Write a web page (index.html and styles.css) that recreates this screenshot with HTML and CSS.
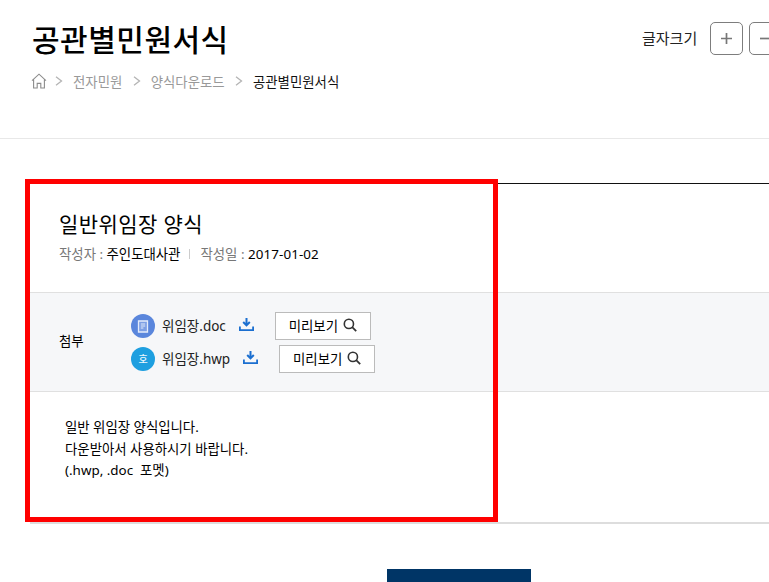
FILE: index.html
```html
<!DOCTYPE html>
<html lang="ko">
<head>
<meta charset="utf-8">
<title>공관별민원서식</title>
<link rel="stylesheet" href="styles.css">
</head>
<body>
<div class="page">
  <header class="head">
    <div class="head-main">
      <h1 class="title">공관별민원서식</h1>
      <nav class="crumbs">
        <svg class="home" width="16" height="16" viewBox="0 0 16 16"><path d="M1 7.6 8 1.2l7 6.4M2.6 6.4V15h3.6v-4.6h3.6V15h3.6V6.4" fill="none" stroke="#8c8c8c" stroke-width="1.1"/></svg>
        <svg class="sep" width="8" height="10" viewBox="0 0 8 10"><path d="M1 .8 6.5 5 1 9.2" fill="none" stroke="#b4b4b4" stroke-width="1.3"/></svg>
        <span class="crumb">전자민원</span>
        <svg class="sep" width="8" height="10" viewBox="0 0 8 10"><path d="M1 .8 6.5 5 1 9.2" fill="none" stroke="#b4b4b4" stroke-width="1.3"/></svg>
        <span class="crumb">양식다운로드</span>
        <svg class="sep" width="8" height="10" viewBox="0 0 8 10"><path d="M1 .8 6.5 5 1 9.2" fill="none" stroke="#b4b4b4" stroke-width="1.3"/></svg>
        <span class="crumb current">공관별민원서식</span>
      </nav>
    </div>
    <div class="font-size">
      <span class="font-label">글자크기</span>
      <button class="size-btn"><svg width="13" height="13" viewBox="0 0 13 13"><path d="M6.5 1v11M1 6.5h11" stroke="#777" stroke-width="1.7"/></svg></button>
      <button class="size-btn"><svg width="13" height="13" viewBox="0 0 13 13"><path d="M1 6.5h11" stroke="#777" stroke-width="1.7"/></svg></button>
    </div>
  </header>

  <main class="article">
    <div class="article-head">
      <h2 class="article-title">일반위임장 양식</h2>
      <p class="meta"><span class="key">작성자 : </span>주인도대사관<i class="bar"></i><span class="key">작성일 : </span><span class="date">2017-01-02</span></p>
    </div>
    <div class="attach">
      <span class="attach-label">첨부</span>
      <ul class="files">
        <li class="file">
          <span class="badge doc"><svg width="12" height="13" viewBox="0 0 12 13"><path d="M1.5 1h9v11h-9z" fill="#7d9fe4" stroke="#e3ebfa" stroke-width="1.3"/><path d="M3.8 4h4.4M3.8 6h4.4M3.8 8h2.6" stroke="#e3ebfa" stroke-width="1"/></svg></span>
          <span class="file-name">위임장.doc</span>
          <svg class="down" width="15" height="13" viewBox="0 0 15 13"><path d="M7.5 0v7M4.2 4 7.5 7.4 10.8 4" fill="none" stroke="#1b6fd0" stroke-width="2"/><path d="M.9 8.5v3.6h13.2V8.5" fill="none" stroke="#1b6fd0" stroke-width="1.8"/></svg>
          <button class="preview">미리보기<svg width="14" height="14" viewBox="0 0 14 14"><circle cx="5.9" cy="5.9" r="4.6" fill="none" stroke="#333" stroke-width="1.6"/><path d="m9.2 9.2 4 4" stroke="#333" stroke-width="1.8"/></svg></button>
        </li>
        <li class="file">
          <span class="badge hwp"><span class="hwp-mark">호</span></span>
          <span class="file-name">위임장.hwp</span>
          <svg class="down" width="15" height="13" viewBox="0 0 15 13"><path d="M7.5 0v7M4.2 4 7.5 7.4 10.8 4" fill="none" stroke="#1b6fd0" stroke-width="2"/><path d="M.9 8.5v3.6h13.2V8.5" fill="none" stroke="#1b6fd0" stroke-width="1.8"/></svg>
          <button class="preview">미리보기<svg width="14" height="14" viewBox="0 0 14 14"><circle cx="5.9" cy="5.9" r="4.6" fill="none" stroke="#333" stroke-width="1.6"/><path d="m9.2 9.2 4 4" stroke="#333" stroke-width="1.8"/></svg></button>
        </li>
      </ul>
    </div>
    <div class="body-text">
      <p>일반 위임장 양식입니다.</p>
      <p>다운받아서 사용하시기 바랍니다.</p>
      <p>(.hwp, .doc&nbsp; 포멧)</p>
    </div>
    <div class="highlight"></div>
  </main>
  <div class="actions"><a class="list-btn"></a></div>
</div>
</body>
</html>
```
FILE: styles.css
```css
* { box-sizing: border-box; }
html, body { margin: 0; padding: 0; height: 582px; overflow: hidden; background: #fff; }
body { font-family: "Noto Sans", "Noto Sans CJK KR", sans-serif; color: #111; }
.page { width: 769px; height: 582px; overflow: hidden; }
h1, h2, p, ul { margin: 0; padding: 0; }
ul { list-style: none; }

.head { height: 139px; border-bottom: 1px solid #e8e8e8; padding: 18px 0 0 32px; display: flex; width: 769px; }
.head-main { width: 610px; flex: none; }
.title { font-size: 30px; line-height: 44px; font-weight: 500; letter-spacing: .5px; color: #000; }
.crumbs { display: flex; align-items: center; height: 20px; margin: 9px 0 0 -1px; font-size: 13.4px; color: #999; }
.home { margin-right: 8px; }
.sep { margin-right: 10px; }
.crumb { margin-right: 10.4px; white-space: nowrap; }
.current { color: #111; }

.font-size { display: flex; align-items: flex-start; flex: none; width: 200px; padding-top: 4px; }
.font-label { font-size: 15px; line-height: 33px; width: 68px; color: #222; }
.size-btn { width: 33px; height: 33px; flex: none; margin-right: 6px; padding: 0; border: 1px solid #7d7d7d; border-radius: 5px; background: #fff; display: flex; align-items: center; justify-content: center; }

.article { position: relative; margin: 44px 0 0 30px; width: 739px; height: 341px; border-top: 1px solid #111; border-bottom: 2px solid #ddd; }
.article-head { height: 109px; padding: 24px 0 0 29px; border-bottom: 1px solid #e0e0e0; }
.article-title { font-size: 21px; line-height: 32px; font-weight: 400; letter-spacing: .4px; color: #000; }
.meta { font-size: 13.4px; line-height: 20px; margin-top: 4px; color: #000; }
.key { color: #777; }
.date { letter-spacing: .1px; }
.bar { display: inline-block; width: 1px; height: 10px; background: #ccc; margin: 0 10px 0 9px; }

.attach { height: 99px; background: #f6f7f9; border-bottom: 1px solid #e0e0e0; display: flex; align-items: flex-start; padding: 19px 0 0 29px; }
.attach-label { width: 72px; font-size: 13.4px; line-height: 20px; margin-top: 19px; color: #000; }
.file { display: flex; align-items: center; height: 28px; margin-bottom: 5px; }
.badge { width: 24px; height: 24px; border-radius: 50%; display: flex; align-items: center; justify-content: center; flex: none; margin-right: 7px; }
.doc { background: #5a86dc; }
.hwp { background: #1e9fe0; }
.hwp-mark { font-size: 10px; line-height: 1; color: #eaf6fd; font-weight: 500; }
.file-name { font-size: 13.5px; color: #222; margin: 0 13px 2px 0; white-space: nowrap; }
.down { margin: 0 21px 3px 0; flex: none; }
.preview { height: 28px; width: 96px; padding: 0 0 2px; border: 1px solid #bbb; background: #fff; font: inherit; font-size: 13.4px; color: #000; display: flex; align-items: center; justify-content: center; gap: 5px; }

.body-text { padding: 25px 0 0 35px; font-size: 13.4px; line-height: 21.5px; color: #000; }

.highlight { position: absolute; left: -5px; top: -5px; width: 473px; height: 343px; border: 5px solid #f00; }

.actions { padding: 45px 0 0 387px; }
.list-btn { display: block; width: 144px; height: 48px; background: #003566; }
```
